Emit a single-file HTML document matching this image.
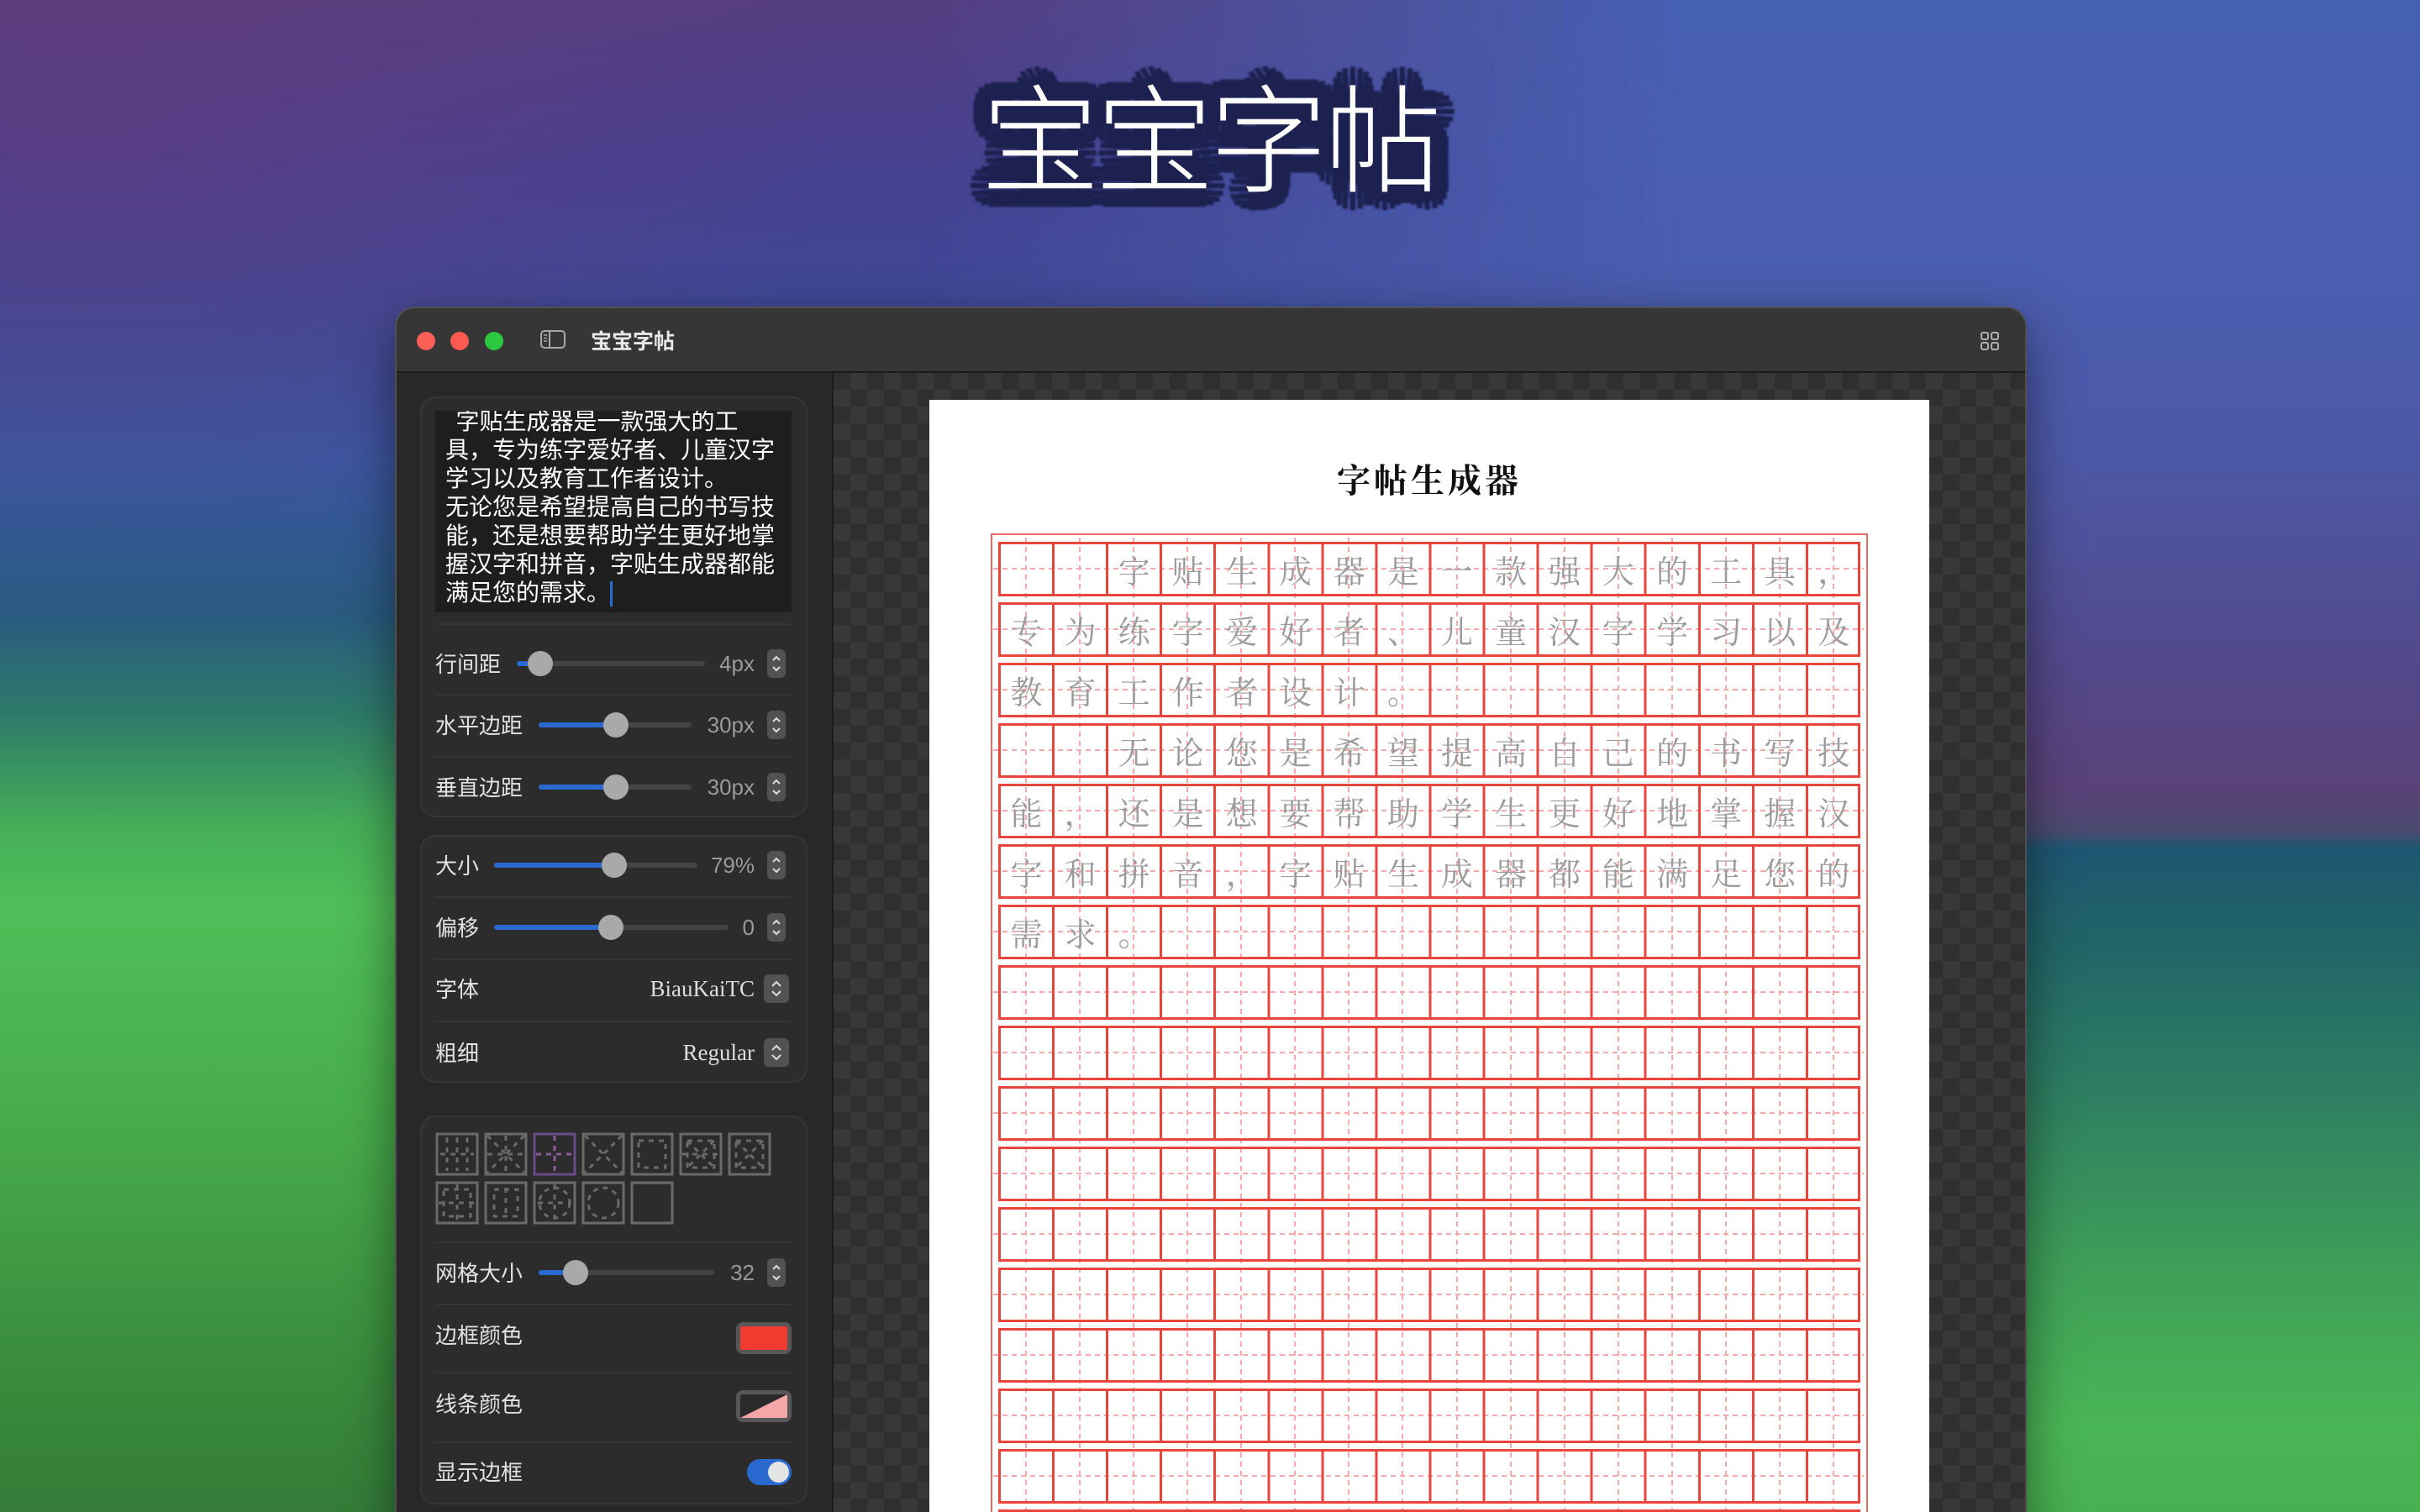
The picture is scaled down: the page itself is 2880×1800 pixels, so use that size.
<!DOCTYPE html>
<html><head><meta charset="utf-8">
<style>
*{margin:0;padding:0;box-sizing:border-box}
html,body{width:2880px;height:1800px;overflow:hidden}
body{position:relative;font-family:"Liberation Sans","Noto Sans CJK SC",sans-serif;background:#3d4a9a}
.bgL{position:absolute;inset:0;background:linear-gradient(to bottom,#553e80 0px,#464090 200px,#3d4a98 400px,#3a56a0 550px,#2a5a80 730px,#2e7a6a 850px,#45ad58 980px,#50be58 1080px,#47aa4a 1350px,#3a8d3e 1620px,#347c38 1800px)}
.bgR{position:absolute;inset:0;background:linear-gradient(to bottom,#4660b2 0px,#4a5eb0 300px,#4c58a6 550px,#53488a 800px,#5a4278 940px,#4a4a70 990px,#1e5672 1010px,#216468 1120px,#2e7e62 1300px,#3e9e58 1500px,#4ab556 1700px,#48b050 1800px);-webkit-mask-image:linear-gradient(to right,transparent 1100px,#000 2000px);mask-image:linear-gradient(to right,transparent 1100px,#000 2000px)}
.bgP{position:absolute;inset:0;background:radial-gradient(ellipse 900px 500px at 100px 150px,rgba(110,60,120,.45),transparent)}
.ttl{position:absolute;left:0;width:2880px;top:58px;text-align:center;font-family:"Noto Sans CJK SC",sans-serif;font-weight:200;font-size:140px;line-height:200px;letter-spacing:-4px;color:#fff}
.ttl.s{color:#1c2150;text-shadow:22px 0 0 #1c2150,-22px 0 0 #1c2150,0 22px 0 #1c2150,0 -22px 0 #1c2150,16px 16px 0 #1c2150,-16px 16px 0 #1c2150,16px -16px 0 #1c2150,-16px -16px 0 #1c2150,20px 9px 0 #1c2150,-20px 9px 0 #1c2150,20px -9px 0 #1c2150,-20px -9px 0 #1c2150,9px 20px 0 #1c2150,-9px 20px 0 #1c2150,9px -20px 0 #1c2150,-9px -20px 0 #1c2150,11px 0 0 #1c2150,-11px 0 0 #1c2150,0 11px 0 #1c2150,0 -11px 0 #1c2150,8px 8px 0 #1c2150,-8px 8px 0 #1c2150,8px -8px 0 #1c2150,-8px -8px 0 #1c2150;filter:blur(1px)}
.win{position:absolute;left:472px;top:367px;width:1938px;height:1500px;border-radius:22px;background:#2a2a2a;overflow:hidden;box-shadow:0 0 0 2px #505050,0 20px 60px rgba(0,0,0,.5)}
.tb{position:absolute;left:0;top:0;right:0;height:77px;background:#363636;border-bottom:2px solid #1a1a1a}
.dot{position:absolute;top:28px;width:22px;height:22px;border-radius:50%}
.side{position:absolute;left:0;top:77px;width:520px;bottom:0;background:#282828;border-right:2px solid #1c1c1c}
.content{position:absolute;left:520px;top:77px;right:0;bottom:0;background-color:#2f2f2f;background-image:linear-gradient(45deg,#383838 25%,transparent 25%,transparent 75%,#383838 75%),linear-gradient(45deg,#383838 25%,transparent 25%,transparent 75%,#383838 75%);background-size:40px 40px;background-position:0 0,20px 20px}
.card{position:absolute;left:28px;width:461px;border-radius:18px;background:#2c2c2c;border:2px solid #363636}
.lab{position:absolute;left:46px;font-size:26px;color:#e2e2e2;line-height:30px;font-family:"Noto Sans CJK SC",sans-serif}
.sep{position:absolute;left:46px;width:424px;height:2px;background:#353535}
.trk{position:absolute;height:6px;border-radius:3px;background:#444}
.fill{position:absolute;left:0;top:0;height:6px;border-radius:3px;background:#2a6ad0}
.knob{position:absolute;top:-12px;width:30px;height:30px;border-radius:50%;background:#a9a9a9;margin-left:-15px}
.val{position:absolute;right:92px;font-size:26px;color:#9a9a9a;line-height:30px}
.stp{position:absolute;left:441px;width:22px;height:34px;border-radius:6px;background:#525252}
.paper{position:absolute;left:1106px;top:476px;width:1190px;height:1330px;background:#fff}
.row{position:absolute;left:1188px;width:1026px;height:65px;border-top:3px solid #e8463c;border-bottom:3px solid #e8463c;border-right:3px solid #e8463c;background-image:repeating-linear-gradient(to right,#e8463c 0 3px,transparent 3px 64.06px);background-origin:border-box;display:flex;font-family:"Noto Serif CJK SC","Noto Sans CJK SC",serif;font-size:38px;color:#9b9b9b}
.row i{font-style:normal;width:64.06px;flex:none;text-align:center;line-height:59px;padding-left:3px}
</style></head><body>
<div class="bgL"></div><div class="bgR"></div><div class="bgP"></div>
<div class="ttl s">宝宝字帖</div>
<div class="ttl">宝宝字帖</div>

<div class="win">
 <div class="tb">
  <div class="dot" style="left:24px;background:#fe5f57"></div>
  <div class="dot" style="left:64px;background:#fe5a52"></div>
  <div class="dot" style="left:105px;background:#2bc840"></div>
  <svg style="position:absolute;left:171px;top:26px" width="30" height="22" viewBox="0 0 30 22"><rect x="1" y="1" width="28" height="20" rx="4" fill="none" stroke="#a8a8a8" stroke-width="2"/><line x1="11" y1="1" x2="11" y2="21" stroke="#a8a8a8" stroke-width="2"/><path d="M4 6h4M4 9.5h4M4 13h4" stroke="#a8a8a8" stroke-width="1.6"/></svg>
  <div style="position:absolute;left:231px;top:20px;font-size:25px;font-weight:bold;color:#e8e8e8;line-height:36px;font-family:'Noto Sans CJK SC',sans-serif">宝宝字帖</div>
  <svg style="position:absolute;left:1884px;top:27px" width="24" height="24" viewBox="0 0 24 24" fill="none" stroke="#b0b0b0" stroke-width="2"><rect x="2" y="2" width="8" height="8" rx="2"/><rect x="14" y="2" width="8" height="8" rx="2"/><rect x="2" y="14" width="8" height="8" rx="2"/><rect x="14" y="14" width="8" height="8" rx="2"/></svg>
 </div>
 <div class="side">
  <div class="card" style="top:28px;height:501px"></div>
  <div style="position:absolute;left:46px;top:45px;width:424px;height:240px;background:#1e1e1e;overflow:hidden">
   <div style="position:absolute;left:12px;top:-6px;font-size:28px;line-height:34px;color:#fff;white-space:nowrap;font-family:'Noto Sans CJK SC',sans-serif">&nbsp;&nbsp;字贴生成器是一款强大的工<br>具，专为练字爱好者、儿童汉字<br>学习以及教育工作者设计。<br>无论您是希望提高自己的书写技<br>能，还是想要帮助学生更好地掌<br>握汉字和拼音，字贴生成器都能<br>满足您的需求。<span style="display:inline-block;width:3px;height:30px;background:#2a6ad0;vertical-align:middle"></span></div>
  </div>
  <div class="sep" style="top:298px"></div>
  <div class="lab" style="top:331px">行间距</div>
  <div class="trk" style="left:143px;top:343px;width:224px"><div class="fill" style="width:28px"></div><div class="knob" style="left:28px"></div></div>
  <div class="val" style="top:331px">4px</div>
  <svg class="stp" style="top:329px" viewBox="0 0 22 34"><path d="M7 13l4-4 4 4M7 21l4 4 4-4" fill="none" stroke="#ddd" stroke-width="2"/></svg>
  <div class="sep" style="top:382px"></div>
  <div class="lab" style="top:404px">水平边距</div>
  <div class="trk" style="left:169px;top:416px;width:182px"><div class="fill" style="width:92px"></div><div class="knob" style="left:92px"></div></div>
  <div class="val" style="top:404px">30px</div>
  <svg class="stp" style="top:402px" viewBox="0 0 22 34"><path d="M7 13l4-4 4 4M7 21l4 4 4-4" fill="none" stroke="#ddd" stroke-width="2"/></svg>
  <div class="sep" style="top:456px"></div>
  <div class="lab" style="top:478px">垂直边距</div>
  <div class="trk" style="left:169px;top:490px;width:182px"><div class="fill" style="width:92px"></div><div class="knob" style="left:92px"></div></div>
  <div class="val" style="top:478px">30px</div>
  <svg class="stp" style="top:476px" viewBox="0 0 22 34"><path d="M7 13l4-4 4 4M7 21l4 4 4-4" fill="none" stroke="#ddd" stroke-width="2"/></svg>

  <div class="card" style="top:550px;height:295px"></div>
  <div class="lab" style="top:571px">大小</div>
  <div class="trk" style="left:116px;top:583px;width:242px"><div class="fill" style="width:143px"></div><div class="knob" style="left:143px"></div></div>
  <div class="val" style="top:571px">79%</div>
  <svg class="stp" style="top:569px" viewBox="0 0 22 34"><path d="M7 13l4-4 4 4M7 21l4 4 4-4" fill="none" stroke="#ddd" stroke-width="2"/></svg>
  <div class="sep" style="top:623px"></div>
  <div class="lab" style="top:645px">偏移</div>
  <div class="trk" style="left:116px;top:657px;width:279px"><div class="fill" style="width:139px"></div><div class="knob" style="left:139px"></div></div>
  <div class="val" style="top:645px">0</div>
  <svg class="stp" style="top:643px" viewBox="0 0 22 34"><path d="M7 13l4-4 4 4M7 21l4 4 4-4" fill="none" stroke="#ddd" stroke-width="2"/></svg>
  <div class="sep" style="top:697px"></div>
  <div class="lab" style="top:718px">字体</div>
  <div class="val" style="top:718px;font-family:'Liberation Serif',serif;color:#ddd;font-size:27px">BiauKaiTC</div>
  <svg class="stp" style="top:716px;left:437px;width:30px" viewBox="0 0 30 34"><path d="M10 14l5-5 5 5M10 20l5 5 5-5" fill="none" stroke="#ddd" stroke-width="2"/></svg>
  <div class="sep" style="top:771px"></div>
  <div class="lab" style="top:794px">粗细</div>
  <div class="val" style="top:794px;font-family:'Liberation Serif',serif;color:#ddd;font-size:27px">Regular</div>
  <svg class="stp" style="top:792px;left:437px;width:30px" viewBox="0 0 30 34"><path d="M10 14l5-5 5 5M10 20l5 5 5-5" fill="none" stroke="#ddd" stroke-width="2"/></svg>

  <div class="card" style="top:884px;height:463px"></div>
  <svg style="position:absolute;left:46px;top:904px" width="420" height="112" viewBox="0 0 420 112" fill="none" stroke="#6a6a6a" stroke-width="3">
   <g stroke-dasharray="6 6">
    <path d="M2 2h48v48H2zM60 2h48v48H60zM176 2h48v48h-48zM234 2h48v48h-48zM292 2h48v48h-48zM350 2h48v48h-48z" stroke-dasharray="none"/>
    <path d="M6 26h40M26 6v40M14 6v40M38 6v40"/>
    <path d="M62 4l44 44M106 4L62 48M62 26h44M84 4v44"/>
    <path d="M178 4l44 44M222 4l-44 44"/>
    <path d="M242 10h32v32h-32z"/>
    <path d="M300 10h32v32h-32zM300 10l32 32M332 10l-32 32M294 26h44"/>
    <path d="M358 10h32v32h-32zM358 10l32 32M390 10l-32 32"/>
    <path d="M2 60h48v48H2zM60 60h48v48H60zM118 60h48v48h-48zM176 60h48v48h-48zM234 60h48v48h-48z" stroke-dasharray="none"/>
    <path d="M10 68h32v32H10zM4 84h44M26 62v44"/>
    <path d="M70 68h28v32H70zM84 66v36"/>
    <circle cx="142" cy="84" r="18"/><path d="M122 84h40M142 62v44"/>
    <circle cx="200" cy="84" r="18"/>
   </g>
   <path d="M118 2h48v48h-48z" stroke="#6b4a8a"/>
   <path d="M120 26h44M142 4v44" stroke="#8a5a9a" stroke-dasharray="6 6"/>
  </svg>
  <div class="sep" style="top:1034px"></div>
  <div class="lab" style="top:1056px">网格大小</div>
  <div class="trk" style="left:169px;top:1068px;width:209px"><div class="fill" style="width:44px"></div><div class="knob" style="left:44px"></div></div>
  <div class="val" style="top:1056px">32</div>
  <svg class="stp" style="top:1054px" viewBox="0 0 22 34"><path d="M7 13l4-4 4 4M7 21l4 4 4-4" fill="none" stroke="#ddd" stroke-width="2"/></svg>
  <div class="sep" style="top:1108px"></div>
  <div class="lab" style="top:1130px">边框颜色</div>
  <div style="position:absolute;left:404px;top:1130px;width:66px;height:38px;border-radius:8px;background:#575757;padding:5px 5px"><div style="width:100%;height:100%;background:#f23b31;border-radius:2px"></div></div>
  <div class="sep" style="top:1189px"></div>
  <div class="lab" style="top:1212px">线条颜色</div>
  <div style="position:absolute;left:404px;top:1211px;width:66px;height:38px;border-radius:8px;background:#575757;padding:5px 5px"><div style="width:100%;height:100%;background:linear-gradient(to bottom right,#2a2a2a 50%,#f6a6a6 50%);border-radius:2px"></div></div>
  <div class="sep" style="top:1272px"></div>
  <div class="lab" style="top:1293px">显示边框</div>
  <div style="position:absolute;left:417px;top:1293px;width:53px;height:31px;border-radius:16px;background:#2a6ad0"><div style="position:absolute;right:3px;top:3px;width:25px;height:25px;border-radius:50%;background:#e4e4e4"></div></div>
 </div>
 <div class="content"></div>
</div>

<div class="paper"></div>
<div style="position:absolute;left:1106px;width:1190px;top:540px;text-align:center;font-family:'Noto Serif CJK SC',serif;font-weight:bold;font-size:40px;letter-spacing:4px;color:#111;line-height:60px">字帖生成器</div>
<div style="position:absolute;left:1179px;top:635px;width:1044px;height:1200px;border:2px solid #ec6a62"></div>
<svg style="position:absolute;left:0;top:0" width="2880" height="1800" fill="none" stroke="#f5a9a9" stroke-width="2" stroke-dasharray="6 5">
 <path d="M1221 640V1800M1285 640V1800M1349 640V1800M1413 640V1800M1477 640V1800M1541 640V1800M1605 640V1800M1669 640V1800M1734 640V1800M1798 640V1800M1862 640V1800M1926 640V1800M1990 640V1800M2054 640V1800M2118 640V1800M2182 640V1800"/>
 <path d="M1182 677H2218M1182 749H2218M1182 821H2218M1182 893H2218M1182 965H2218M1182 1037H2218M1182 1109H2218M1182 1181H2218M1182 1253H2218M1182 1325H2218M1182 1397H2218M1182 1469H2218M1182 1541H2218M1182 1613H2218M1182 1685H2218M1182 1757H2218"/>
</svg>
<div class="row" style="top:645px"><i></i><i></i><i>字</i><i>贴</i><i>生</i><i>成</i><i>器</i><i>是</i><i>一</i><i>款</i><i>强</i><i>大</i><i>的</i><i>工</i><i>具</i><i>，</i></div>
<div class="row" style="top:717px"><i>专</i><i>为</i><i>练</i><i>字</i><i>爱</i><i>好</i><i>者</i><i>、</i><i>儿</i><i>童</i><i>汉</i><i>字</i><i>学</i><i>习</i><i>以</i><i>及</i></div>
<div class="row" style="top:789px"><i>教</i><i>育</i><i>工</i><i>作</i><i>者</i><i>设</i><i>计</i><i>。</i></div>
<div class="row" style="top:861px"><i></i><i></i><i>无</i><i>论</i><i>您</i><i>是</i><i>希</i><i>望</i><i>提</i><i>高</i><i>自</i><i>己</i><i>的</i><i>书</i><i>写</i><i>技</i></div>
<div class="row" style="top:933px"><i>能</i><i>，</i><i>还</i><i>是</i><i>想</i><i>要</i><i>帮</i><i>助</i><i>学</i><i>生</i><i>更</i><i>好</i><i>地</i><i>掌</i><i>握</i><i>汉</i></div>
<div class="row" style="top:1005px"><i>字</i><i>和</i><i>拼</i><i>音</i><i>，</i><i>字</i><i>贴</i><i>生</i><i>成</i><i>器</i><i>都</i><i>能</i><i>满</i><i>足</i><i>您</i><i>的</i></div>
<div class="row" style="top:1077px"><i>需</i><i>求</i><i>。</i></div>
<div class="row" style="top:1149px"></div>
<div class="row" style="top:1221px"></div>
<div class="row" style="top:1293px"></div>
<div class="row" style="top:1365px"></div>
<div class="row" style="top:1437px"></div>
<div class="row" style="top:1509px"></div>
<div class="row" style="top:1581px"></div>
<div class="row" style="top:1653px"></div>
<div class="row" style="top:1725px"></div>
<div class="row" style="top:1797px"></div>
</body></html>
